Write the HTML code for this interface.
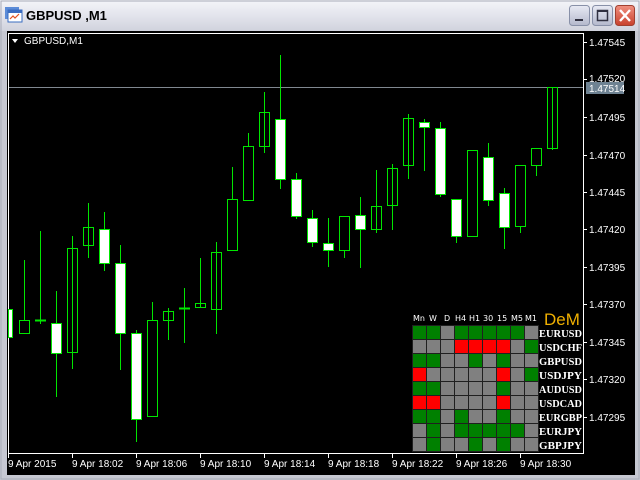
<!DOCTYPE html>
<html><head><meta charset="utf-8"><style>
html,body{margin:0;padding:0;width:640px;height:480px;overflow:hidden;background:#d4d0c8;}
svg{display:block}
</style></head><body>
<svg width="640" height="480" xmlns="http://www.w3.org/2000/svg" font-family="Liberation Sans, sans-serif">
<defs>
<linearGradient id="tb" x1="0" y1="0" x2="0" y2="1">
<stop offset="0" stop-color="#f4f5f9"/><stop offset="0.5" stop-color="#e3e4ec"/><stop offset="1" stop-color="#d0d2dd"/></linearGradient>
<linearGradient id="bt" x1="0" y1="0" x2="0" y2="1"><stop offset="0" stop-color="#e8eaf4"/><stop offset="1" stop-color="#b4b8cc"/></linearGradient>
<linearGradient id="cl" x1="0" y1="0" x2="0" y2="1"><stop offset="0" stop-color="#f09080"/><stop offset="1" stop-color="#c8402c"/></linearGradient>
</defs>
<rect x="0" y="0" width="640" height="480" fill="#c6c8d2"/>
<rect x="0" y="0" width="640" height="31" fill="url(#tb)"/>
<rect x="1" y="1" width="638" height="478" fill="none" stroke="#a8abb8"/>
<rect x="5" y="7" width="14" height="12" fill="#5c8cd8"/>
<rect x="8" y="10" width="14" height="12" fill="#fff" stroke="#3a6cc0"/>
<rect x="8" y="10" width="14" height="3" fill="#3a6cc0"/>
<polyline points="10,19 13,16 15,18 19,14" fill="none" stroke="#e05020" stroke-width="1.2"/>
<text x="26" y="20" font-size="13" font-weight="bold" fill="#000">GBPUSD ,M1</text>
<rect x="569.5" y="5.5" width="20" height="20" rx="3" fill="url(#bt)" stroke="#8890a8"/>
<rect x="575" y="19" width="8" height="2" fill="#303040"/>
<rect x="592.5" y="5.5" width="20" height="20" rx="3" fill="url(#bt)" stroke="#8890a8"/>
<rect x="597.5" y="10.5" width="10" height="10" fill="none" stroke="#303040" stroke-width="1.5"/>
<rect x="597" y="10" width="11" height="2" fill="#303040"/>
<rect x="615.5" y="5.5" width="19" height="20" rx="3" fill="url(#cl)" stroke="#a04030"/>
<path d="M620 10 L630 21 M630 10 L620 21" stroke="#fff" stroke-width="2.4"/>
<rect x="7" y="31" width="628" height="444" fill="#000"/>
<rect x="8.5" y="33.5" width="575" height="420" fill="none" stroke="#fff"/>
<text x="24" y="44" font-size="10" fill="#fff">GBPUSD,M1</text>
<path d="M12 39 L18 39 L15 43 Z" fill="#fff"/>
<line x1="9" y1="87.5" x2="583" y2="87.5" stroke="#808890"/>
<g font-size="10" fill="#fff">
<g stroke="#fff">
<line x1="583" y1="42.5" x2="587" y2="42.5"/><line x1="583" y1="79.5" x2="587" y2="79.5"/>
<line x1="583" y1="117.5" x2="587" y2="117.5"/><line x1="583" y1="155.5" x2="587" y2="155.5"/>
<line x1="583" y1="192.5" x2="587" y2="192.5"/><line x1="583" y1="229.5" x2="587" y2="229.5"/>
<line x1="583" y1="267.5" x2="587" y2="267.5"/><line x1="583" y1="304.5" x2="587" y2="304.5"/>
<line x1="583" y1="342.5" x2="587" y2="342.5"/><line x1="583" y1="379.5" x2="587" y2="379.5"/>
<line x1="583" y1="417.5" x2="587" y2="417.5"/>
</g>
<text x="589" y="46">1.47545</text>
<text x="589" y="82">1.47520</text>
<text x="589" y="121">1.47495</text>
<text x="589" y="159">1.47470</text>
<text x="589" y="196">1.47445</text>
<text x="589" y="233">1.47420</text>
<text x="589" y="271">1.47395</text>
<text x="589" y="308">1.47370</text>
<text x="589" y="346">1.47345</text>
<text x="589" y="383">1.47320</text>
<text x="589" y="421">1.47295</text>
<rect x="586" y="82" width="38" height="12" fill="#6e8292"/>
<text x="589" y="92">1.47514</text>
</g>
<g font-size="10" fill="#fff">
<g stroke="#fff">
<line x1="8.5" y1="453" x2="8.5" y2="458"/><line x1="72.5" y1="453" x2="72.5" y2="458"/>
<line x1="136.5" y1="453" x2="136.5" y2="458"/><line x1="200.5" y1="453" x2="200.5" y2="458"/>
<line x1="264.5" y1="453" x2="264.5" y2="458"/><line x1="328.5" y1="453" x2="328.5" y2="458"/>
<line x1="392.5" y1="453" x2="392.5" y2="458"/><line x1="456.5" y1="453" x2="456.5" y2="458"/>
<line x1="520.5" y1="453" x2="520.5" y2="458"/>
</g>
<text x="8" y="467">9 Apr 2015</text>
<text x="72" y="467">9 Apr 18:02</text>
<text x="136" y="467">9 Apr 18:06</text>
<text x="200" y="467">9 Apr 18:10</text>
<text x="264" y="467">9 Apr 18:14</text>
<text x="328" y="467">9 Apr 18:18</text>
<text x="392" y="467">9 Apr 18:22</text>
<text x="456" y="467">9 Apr 18:26</text>
<text x="520" y="467">9 Apr 18:30</text>
</g>
<g stroke="#00e600" stroke-width="1">
<path d="M24.5 260V320 M40.5 231V324 M56.5 291V397 M72.5 236V369 M88.5 203V258 M104.5 212V271 M120.5 245V370 M136.5 330V442 M152.5 302V320 M168.5 308V340 M184.5 288V343 M200.5 258V308 M216.5 242V334 M232.5 167V199 M248.5 133V146 M264.5 92V153 M280.5 55V189 M296.5 173V219 M312.5 210V247 M328.5 218V267 M344.5 250V258 M360.5 197V268 M376.5 170V233 M392.5 164V230 M408.5 114V179 M424.5 119V171 M440.5 122V197 M456.5 236V243 M488.5 143V206 M504.5 188V249 M520.5 226V233 M536.5 165V176 M552.5 87V150"/>
<g fill="#fff">
<rect x="8.5" y="309.5" width="4" height="28"/>
<rect x="51.5" y="323.5" width="10" height="30"/>
<rect x="99.5" y="229.5" width="10" height="34"/>
<rect x="115.5" y="263.5" width="10" height="70"/>
<rect x="131.5" y="333.5" width="10" height="86"/>
<rect x="275.5" y="119.5" width="10" height="60"/>
<rect x="291.5" y="179.5" width="10" height="37"/>
<rect x="307.5" y="218.5" width="10" height="24"/>
<rect x="323.5" y="243.5" width="10" height="7"/>
<rect x="355.5" y="215.5" width="10" height="14"/>
<rect x="419.5" y="122.5" width="10" height="5"/>
<rect x="435.5" y="128.5" width="10" height="66"/>
<rect x="451.5" y="199.5" width="10" height="37"/>
<rect x="483.5" y="157.5" width="10" height="43"/>
<rect x="499.5" y="193.5" width="10" height="34"/>
</g>
<g fill="none">
<rect x="19.5" y="320.5" width="10" height="13"/>
<rect x="67.5" y="248.5" width="10" height="104"/>
<rect x="83.5" y="227.5" width="10" height="18"/>
<rect x="147.5" y="320.5" width="10" height="96"/>
<rect x="163.5" y="311.5" width="10" height="9"/>
<rect x="195.5" y="303.5" width="10" height="4"/>
<rect x="211.5" y="252.5" width="10" height="57"/>
<rect x="227.5" y="199.5" width="10" height="51"/>
<rect x="243.5" y="146.5" width="10" height="54"/>
<rect x="259.5" y="112.5" width="10" height="34"/>
<rect x="339.5" y="216.5" width="10" height="34"/>
<rect x="371.5" y="206.5" width="10" height="23"/>
<rect x="387.5" y="168.5" width="10" height="37"/>
<rect x="403.5" y="118.5" width="10" height="47"/>
<rect x="467.5" y="150.5" width="10" height="86"/>
<rect x="515.5" y="165.5" width="10" height="61"/>
<rect x="531.5" y="148.5" width="10" height="17"/>
<rect x="547.5" y="87.5" width="10" height="61"/>
</g>
<path d="M35 320.5H46 M179 308.5H190" stroke-width="2"/>
</g>
<g font-size="8" fill="#fff" font-family="DejaVu Sans, sans-serif">
<text x="413" y="321">Mn</text><text x="429" y="321">W</text><text x="444" y="321">D</text>
<text x="455" y="321">H4</text><text x="469" y="321">H1</text><text x="483" y="321">30</text>
<text x="497" y="321">15</text><text x="511" y="321">M5</text><text x="525" y="321">M1</text>
</g>
<text x="544" y="325" font-size="17" fill="#f0b000">DeM</text>
<g stroke="#202020" stroke-width="1">
<rect x="412.5" y="325.5" width="14" height="14" fill="#008000"/><rect x="426.5" y="325.5" width="14" height="14" fill="#008000"/><rect x="440.5" y="325.5" width="14" height="14" fill="#808080"/><rect x="454.5" y="325.5" width="14" height="14" fill="#008000"/><rect x="468.5" y="325.5" width="14" height="14" fill="#008000"/><rect x="482.5" y="325.5" width="14" height="14" fill="#008000"/><rect x="496.5" y="325.5" width="14" height="14" fill="#008000"/><rect x="510.5" y="325.5" width="14" height="14" fill="#008000"/><rect x="524.5" y="325.5" width="14" height="14" fill="#808080"/>
<rect x="412.5" y="339.5" width="14" height="14" fill="#808080"/><rect x="426.5" y="339.5" width="14" height="14" fill="#808080"/><rect x="440.5" y="339.5" width="14" height="14" fill="#808080"/><rect x="454.5" y="339.5" width="14" height="14" fill="#ff0000"/><rect x="468.5" y="339.5" width="14" height="14" fill="#ff0000"/><rect x="482.5" y="339.5" width="14" height="14" fill="#ff0000"/><rect x="496.5" y="339.5" width="14" height="14" fill="#ff0000"/><rect x="510.5" y="339.5" width="14" height="14" fill="#808080"/><rect x="524.5" y="339.5" width="14" height="14" fill="#008000"/>
<rect x="412.5" y="353.5" width="14" height="14" fill="#008000"/><rect x="426.5" y="353.5" width="14" height="14" fill="#008000"/><rect x="440.5" y="353.5" width="14" height="14" fill="#808080"/><rect x="454.5" y="353.5" width="14" height="14" fill="#808080"/><rect x="468.5" y="353.5" width="14" height="14" fill="#008000"/><rect x="482.5" y="353.5" width="14" height="14" fill="#808080"/><rect x="496.5" y="353.5" width="14" height="14" fill="#008000"/><rect x="510.5" y="353.5" width="14" height="14" fill="#808080"/><rect x="524.5" y="353.5" width="14" height="14" fill="#808080"/>
<rect x="412.5" y="367.5" width="14" height="14" fill="#ff0000"/><rect x="426.5" y="367.5" width="14" height="14" fill="#808080"/><rect x="440.5" y="367.5" width="14" height="14" fill="#808080"/><rect x="454.5" y="367.5" width="14" height="14" fill="#808080"/><rect x="468.5" y="367.5" width="14" height="14" fill="#808080"/><rect x="482.5" y="367.5" width="14" height="14" fill="#808080"/><rect x="496.5" y="367.5" width="14" height="14" fill="#ff0000"/><rect x="510.5" y="367.5" width="14" height="14" fill="#808080"/><rect x="524.5" y="367.5" width="14" height="14" fill="#008000"/>
<rect x="412.5" y="381.5" width="14" height="14" fill="#008000"/><rect x="426.5" y="381.5" width="14" height="14" fill="#008000"/><rect x="440.5" y="381.5" width="14" height="14" fill="#808080"/><rect x="454.5" y="381.5" width="14" height="14" fill="#808080"/><rect x="468.5" y="381.5" width="14" height="14" fill="#808080"/><rect x="482.5" y="381.5" width="14" height="14" fill="#808080"/><rect x="496.5" y="381.5" width="14" height="14" fill="#008000"/><rect x="510.5" y="381.5" width="14" height="14" fill="#808080"/><rect x="524.5" y="381.5" width="14" height="14" fill="#808080"/>
<rect x="412.5" y="395.5" width="14" height="14" fill="#ff0000"/><rect x="426.5" y="395.5" width="14" height="14" fill="#ff0000"/><rect x="440.5" y="395.5" width="14" height="14" fill="#808080"/><rect x="454.5" y="395.5" width="14" height="14" fill="#808080"/><rect x="468.5" y="395.5" width="14" height="14" fill="#808080"/><rect x="482.5" y="395.5" width="14" height="14" fill="#808080"/><rect x="496.5" y="395.5" width="14" height="14" fill="#ff0000"/><rect x="510.5" y="395.5" width="14" height="14" fill="#808080"/><rect x="524.5" y="395.5" width="14" height="14" fill="#808080"/>
<rect x="412.5" y="409.5" width="14" height="14" fill="#008000"/><rect x="426.5" y="409.5" width="14" height="14" fill="#008000"/><rect x="440.5" y="409.5" width="14" height="14" fill="#808080"/><rect x="454.5" y="409.5" width="14" height="14" fill="#008000"/><rect x="468.5" y="409.5" width="14" height="14" fill="#808080"/><rect x="482.5" y="409.5" width="14" height="14" fill="#808080"/><rect x="496.5" y="409.5" width="14" height="14" fill="#008000"/><rect x="510.5" y="409.5" width="14" height="14" fill="#808080"/><rect x="524.5" y="409.5" width="14" height="14" fill="#808080"/>
<rect x="412.5" y="423.5" width="14" height="14" fill="#808080"/><rect x="426.5" y="423.5" width="14" height="14" fill="#008000"/><rect x="440.5" y="423.5" width="14" height="14" fill="#808080"/><rect x="454.5" y="423.5" width="14" height="14" fill="#008000"/><rect x="468.5" y="423.5" width="14" height="14" fill="#008000"/><rect x="482.5" y="423.5" width="14" height="14" fill="#008000"/><rect x="496.5" y="423.5" width="14" height="14" fill="#008000"/><rect x="510.5" y="423.5" width="14" height="14" fill="#008000"/><rect x="524.5" y="423.5" width="14" height="14" fill="#808080"/>
<rect x="412.5" y="437.5" width="14" height="14" fill="#808080"/><rect x="426.5" y="437.5" width="14" height="14" fill="#008000"/><rect x="440.5" y="437.5" width="14" height="14" fill="#808080"/><rect x="454.5" y="437.5" width="14" height="14" fill="#808080"/><rect x="468.5" y="437.5" width="14" height="14" fill="#008000"/><rect x="482.5" y="437.5" width="14" height="14" fill="#808080"/><rect x="496.5" y="437.5" width="14" height="14" fill="#008000"/><rect x="510.5" y="437.5" width="14" height="14" fill="#808080"/><rect x="524.5" y="437.5" width="14" height="14" fill="#808080"/>
</g>
<g font-family="Liberation Serif, serif" font-size="11" font-weight="bold" fill="#ffffff">
<text x="539" y="337" textLength="43" lengthAdjust="spacingAndGlyphs">EURUSD</text>
<text x="539" y="351" textLength="43" lengthAdjust="spacingAndGlyphs">USDCHF</text>
<text x="539" y="365" textLength="43" lengthAdjust="spacingAndGlyphs">GBPUSD</text>
<text x="539" y="379" textLength="43" lengthAdjust="spacingAndGlyphs">USDJPY</text>
<text x="539" y="393" textLength="43" lengthAdjust="spacingAndGlyphs">AUDUSD</text>
<text x="539" y="407" textLength="43" lengthAdjust="spacingAndGlyphs">USDCAD</text>
<text x="539" y="421" textLength="43" lengthAdjust="spacingAndGlyphs">EURGBP</text>
<text x="539" y="435" textLength="43" lengthAdjust="spacingAndGlyphs">EURJPY</text>
<text x="539" y="449" textLength="43" lengthAdjust="spacingAndGlyphs">GBPJPY</text>
</g>
</svg>
</body></html>
